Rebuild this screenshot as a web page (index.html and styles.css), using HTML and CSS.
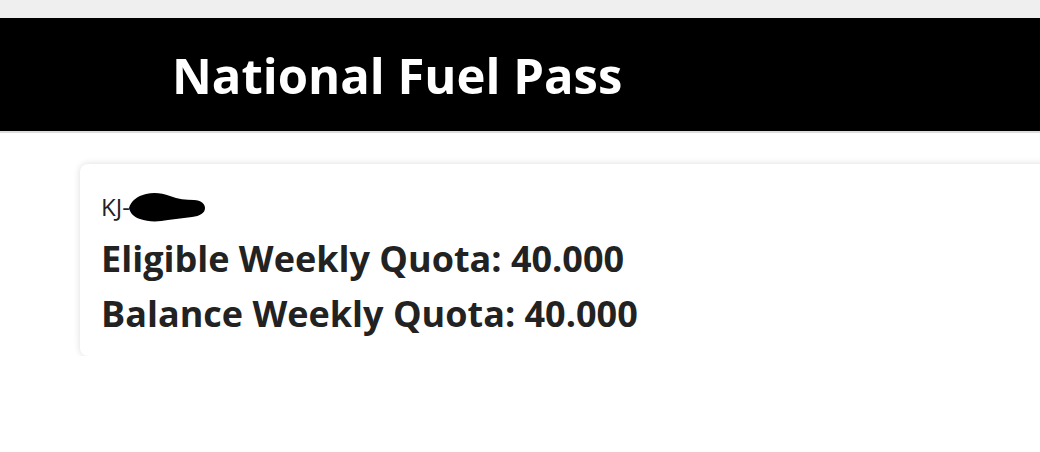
FILE: index.html
```html
<!DOCTYPE html>
<html lang="en">
<head>
<meta charset="utf-8">
<title>National Fuel Pass</title>
<link rel="stylesheet" href="styles.css">
</head>
<body>
<div class="top-strip"></div>
<header class="site-header">
  <h1 class="site-title">National Fuel Pass</h1>
</header>
<main class="content">
  <section class="quota-card">
    <div class="vehicle-no">KJ-<svg class="redacted" viewBox="0 0 78 32" width="78" height="32" aria-hidden="true"><path d="M1 17 C3 10 9 5 18 3 C26 1 34 2 42 5 C50 8 58 9 66 9 C73 9 77 13 77 17 C77 22 72 25 64 26 C56 27 48 28 40 29 C30 31 20 31 12 28 C6 26 2 22 1 17 Z" fill="#000"/></svg></div>
    <div class="quota-line">Eligible Weekly Quota: 40.000</div>
    <div class="quota-line">Balance Weekly Quota: 40.000</div>
  </section>
</main>
</body>
</html>
```

FILE: styles.css
```css
html, body {
  margin: 0;
  padding: 0;
  background: #fff;
  overflow: hidden;
  font-family: "Open Sans", "Noto Sans", sans-serif;
}

.top-strip {
  height: 18px;
  background: #efefef;
}

.site-header {
  background: #000;
  height: 113px;
  border-bottom: 2px solid #dcdcdc;
  display: flex;
  align-items: center;
  padding-left: 172px;
}

.site-title {
  margin: 0;
  color: #fff;
  font-size: 49px;
  font-weight: 700;
  line-height: 1;
  padding-top: 2px;
}

.content {
  padding: 31px 0 0 80px;
}

.quota-card {
  width: 1000px;
  height: 192px;
  box-sizing: border-box;
  background: #fff;
  border-radius: 8px;
  box-shadow: 0 0 7px rgba(0, 0, 0, 0.14);
  padding: 27px 0 0 21px;
  color: #222;
}

.vehicle-no {
  font-size: 24px;
  line-height: 30px;
  margin-bottom: 8px;
  display: flex;
  align-items: center;
}

.redacted {
  display: block;
  margin-left: -2px;
  margin-top: 0;
}

.quota-line {
  font-size: 36px;
  font-weight: 700;
  line-height: 55px;
}
```
